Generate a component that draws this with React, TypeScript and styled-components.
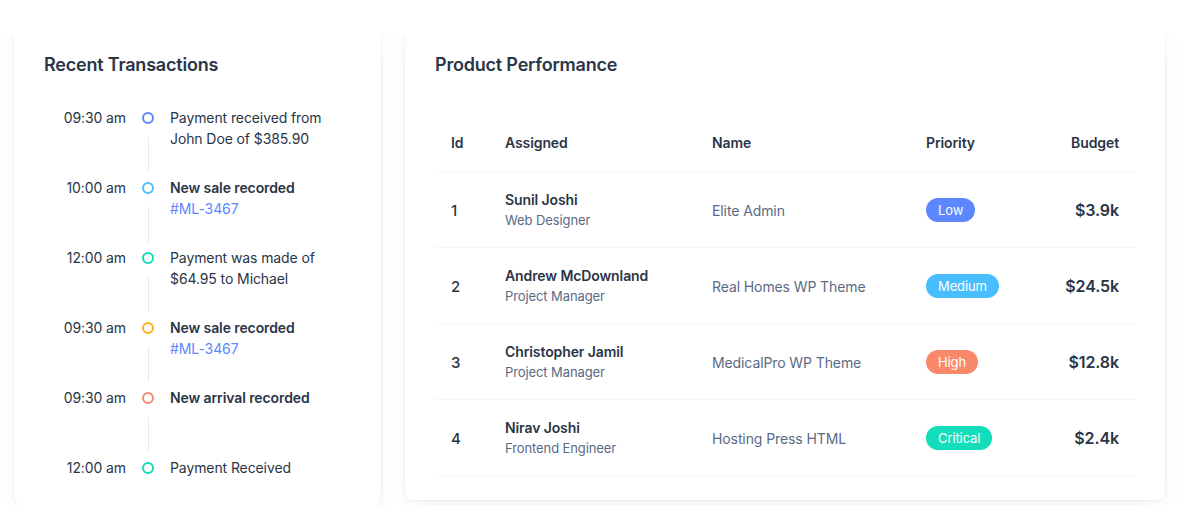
import React from "react";
import styled, { createGlobalStyle } from "styled-components";

const GlobalStyle = createGlobalStyle`
  html, body { margin: 0; padding: 0; background: #ffffff; }
  body {
    font-family: Inter, "Noto Sans", "Liberation Sans", sans-serif;
    color: #2a3547;
    letter-spacing: -0.1px;
    -webkit-font-smoothing: antialiased;
  }
  * { box-sizing: border-box; }
`;

const TopBar = styled.header`
  position: fixed;
  top: 0;
  left: 0;
  right: 0;
  height: 35px;
  background: #ffffff;
  z-index: 10;
`;

const Page = styled.main`
  display: grid;
  grid-template-columns: 367px 760px;
  column-gap: 24px;
  align-items: start;
  padding: 24px 19px 0 14px;
`;

const Card = styled.section<{ $pb: number }>`
  background: #ffffff;
  border-radius: 7px;
  box-shadow: rgba(145, 158, 171, 0.3) 0px 0px 2px 0px,
    rgba(145, 158, 171, 0.12) 0px 12px 24px -4px;
  padding: 30px 30px ${(p) => p.$pb}px 30px;
`;

const Title = styled.h2`
  margin: 0;
  font-size: 18px;
  line-height: 22px;
  font-weight: 600;
  color: #2a3547;
  letter-spacing: -0.2px;
`;

/* ---------- Timeline ---------- */

const Timeline = styled.ul`
  list-style: none;
  margin: 31px 0 0 0;
  padding: 0;
`;

const Item = styled.li<{ $last?: boolean }>`
  display: grid;
  grid-template-columns: 82px 12px 1fr;
  column-gap: 16px;
  min-height: ${(p) => (p.$last ? "21px" : "70px")};
`;

const Time = styled.span`
  font-size: 14px;
  line-height: 21px;
  color: #2a3547;
  text-align: right;
  white-space: nowrap;
`;

const Separator = styled.div`
  display: flex;
  flex-direction: column;
  align-items: center;
`;

const Dot = styled.span<{ $color: string }>`
  width: 12px;
  height: 12px;
  margin-top: 4.5px;
  border-radius: 50%;
  border: 2px solid ${(p) => p.$color};
  flex-shrink: 0;
`;

const Connector = styled.span`
  flex: 1;
  width: 1px;
  background: #e5eaef;
  margin: 13px 0 5px;
`;

const Content = styled.div<{ $bold?: boolean }>`
  font-size: 14px;
  line-height: 21px;
  font-weight: ${(p) => (p.$bold ? 600 : 400)};
  color: #2a3547;
  padding-right: 4px;
`;

const Ref = styled.span`
  display: block;
  color: #5d87ff;
  font-weight: 400;
`;

/* ---------- Table ---------- */

const Table = styled.table`
  width: 100%;
  border-collapse: collapse;
  table-layout: fixed;
  margin-top: 39px;
`;

const Th = styled.th<{ $w?: number; $right?: boolean }>`
  width: ${(p) => (p.$w ? `${p.$w}px` : "auto")};
  padding: 16px;
  font-size: 14px;
  line-height: 24px;
  font-weight: 600;
  color: #2a3547;
  text-align: ${(p) => (p.$right ? "right" : "left")};
  border-bottom: 1px solid #f5f6f8;
`;

const Td = styled.td<{ $right?: boolean }>`
  padding: 16px;
  height: 76px;
  vertical-align: middle;
  text-align: ${(p) => (p.$right ? "right" : "left")};
  border-bottom: 1px solid #f5f6f8;
`;

const IdText = styled.span`
  font-size: 15px;
  font-weight: 500;
  color: #2a3547;
`;

const Person = styled.div`
  display: flex;
  flex-direction: column;
`;

const PersonName = styled.span`
  font-size: 14px;
  line-height: 21px;
  font-weight: 600;
  color: #2a3547;
  white-space: nowrap;
`;

const PersonRole = styled.span`
  font-size: 13px;
  line-height: 20px;
  color: #5a6a85;
`;

const Product = styled.span`
  font-size: 14px;
  color: #5a6a85;
`;

const Chip = styled.span<{ $bg: string }>`
  display: inline-flex;
  align-items: center;
  height: 24px;
  padding: 0 12px;
  border-radius: 12px;
  background: ${(p) => p.$bg};
  color: #ffffff;
  font-size: 13px;
  font-weight: 400;
`;

const Budget = styled.span`
  font-size: 16px;
  font-weight: 600;
  color: #2a3547;
`;

const transactions = [
  { time: "09:30 am", color: "#5d87ff", text: "Payment received from John Doe of $385.90" },
  { time: "10:00 am", color: "#49beff", text: "New sale recorded", bold: true, ref: "#ML-3467" },
  { time: "12:00 am", color: "#13deb9", text: "Payment was made of $64.95 to Michael" },
  { time: "09:30 am", color: "#ffae1f", text: "New sale recorded", bold: true, ref: "#ML-3467" },
  { time: "09:30 am", color: "#fa896b", text: "New arrival recorded", bold: true },
  { time: "12:00 am", color: "#13deb9", text: "Payment Received" },
];

const products = [
  { id: 1, name: "Sunil Joshi", role: "Web Designer", product: "Elite Admin", priority: "Low", color: "#5d87ff", budget: "$3.9k" },
  { id: 2, name: "Andrew McDownland", role: "Project Manager", product: "Real Homes WP Theme", priority: "Medium", color: "#49beff", budget: "$24.5k" },
  { id: 3, name: "Christopher Jamil", role: "Project Manager", product: "MedicalPro WP Theme", priority: "High", color: "#fa896b", budget: "$12.8k" },
  { id: 4, name: "Nirav Joshi", role: "Frontend Engineer", product: "Hosting Press HTML", priority: "Critical", color: "#13deb9", budget: "$2.4k" },
];

export default function App() {
  return (
    <>
      <GlobalStyle />
      <TopBar />
      <Page>
        <Card $pb={27}>
          <Title>Recent Transactions</Title>
          <Timeline>
            {transactions.map((t, i) => {
              const last = i === transactions.length - 1;
              return (
                <Item key={i} $last={last}>
                  <Time>{t.time}</Time>
                  <Separator>
                    <Dot $color={t.color} />
                    {!last && <Connector />}
                  </Separator>
                  <Content $bold={t.bold}>
                    {t.text}
                    {t.ref && <Ref>{t.ref}</Ref>}
                  </Content>
                </Item>
              );
            })}
          </Timeline>
        </Card>
        <Card $pb={24}>
          <Title>Product Performance</Title>
          <Table>
            <thead>
              <tr>
                <Th $w={54}>Id</Th>
                <Th $w={207}>Assigned</Th>
                <Th $w={214}>Name</Th>
                <Th $w={112}>Priority</Th>
                <Th $right>Budget</Th>
              </tr>
            </thead>
            <tbody>
              {products.map((p) => (
                <tr key={p.id}>
                  <Td>
                    <IdText>{p.id}</IdText>
                  </Td>
                  <Td>
                    <Person>
                      <PersonName>{p.name}</PersonName>
                      <PersonRole>{p.role}</PersonRole>
                    </Person>
                  </Td>
                  <Td>
                    <Product>{p.product}</Product>
                  </Td>
                  <Td>
                    <Chip $bg={p.color}>{p.priority}</Chip>
                  </Td>
                  <Td $right>
                    <Budget>{p.budget}</Budget>
                  </Td>
                </tr>
              ))}
            </tbody>
          </Table>
        </Card>
      </Page>
    </>
  );
}
